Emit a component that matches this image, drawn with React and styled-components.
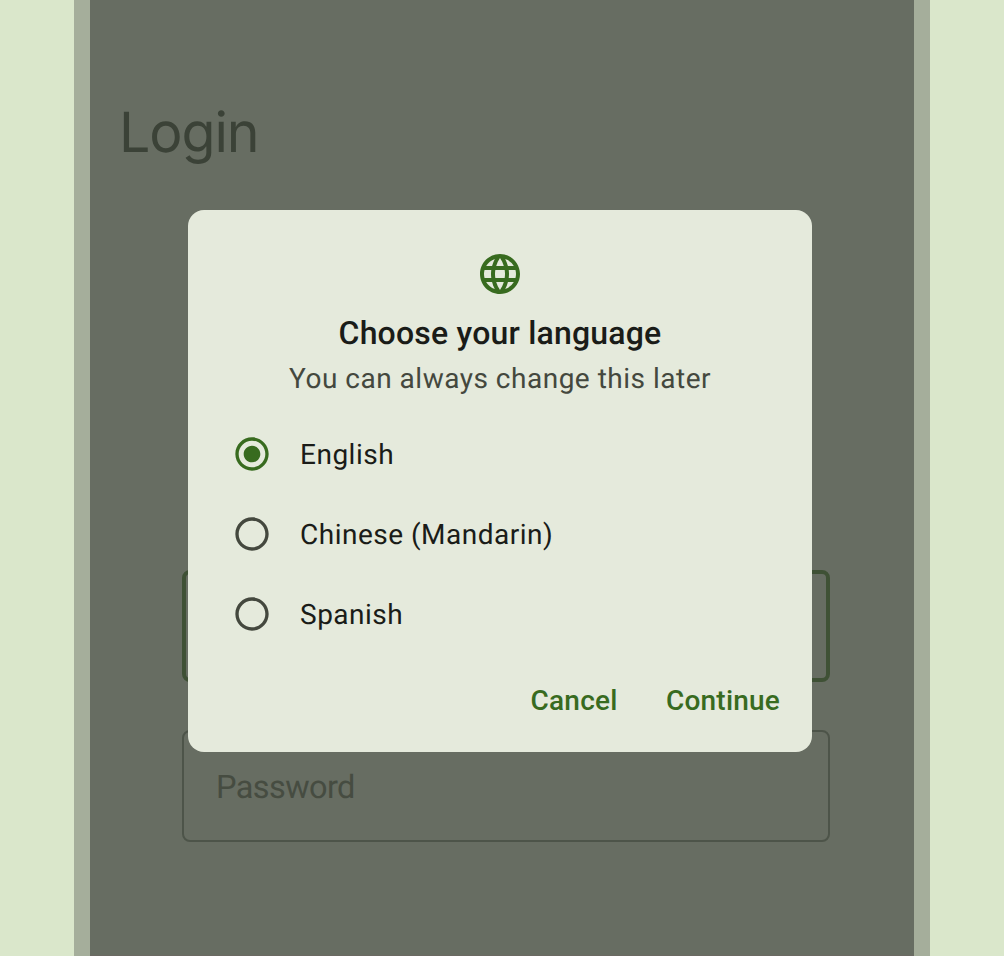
import React from "react";
import styled, { createGlobalStyle } from "styled-components";
import { MdLanguage, MdRadioButtonChecked, MdRadioButtonUnchecked } from "react-icons/md";

const GlobalStyle = createGlobalStyle`
  * { box-sizing: border-box; }
  body { margin: 0; background: #dae7cb; font-family: Roboto, "Liberation Sans", sans-serif; text-rendering: geometricPrecision; }
  h1, h2, p { margin: 0; font-weight: 400; }
`;

const Page = styled.div`
  height: 956px;
  display: flex;
  justify-content: center;
  overflow: hidden;
  background: #dae7cb;
`;

const Device = styled.main`
  position: relative;
  width: 856px;
  height: 956px;
  border: solid #a5ae9b;
  border-width: 0 16px;
  background: #676d62;
  box-shadow: inset 0 -1px #6b6962;
`;

const LoginScreen = styled.section`
  display: flex;
  flex-direction: column;
  padding: 98px 84px 0 92px;
`;

const ScreenTitle = styled.h1`
  height: 70px;
  margin: 0 0 402px -63px;
  font: 430 55.5px/70px Inter, sans-serif;
  letter-spacing: -1.1px;
  color: #3b4237;
`;

const Field = styled.div`
  display: flex;
  align-items: center;
  height: 112px;
  margin-bottom: 48px;
  padding: 2px 32px 0;
  border: ${(p) => (p.$focused ? "4px solid #3f5135" : "2px solid #4d5449")};
  border-radius: 8px;
  font-size: 32.5px;
  line-height: 40px;
  letter-spacing: -0.6px;
  color: #464c41;
`;

const Dialog = styled.section`
  position: absolute;
  top: 210px;
  left: 98px;
  width: 624px;
  height: 542px;
  padding: 40px 32px 0;
  display: flex;
  flex-direction: column;
  border-radius: 16px;
  background: #e5eadc;
`;

const DialogHeader = styled.header`
  display: flex;
  flex-direction: column;
  align-items: center;
  color: #386b1f;
`;

const DialogTitle = styled.h2`
  margin-top: 11px;
  font-size: 32px;
  font-weight: 500;
  line-height: 48px;
  letter-spacing: 0.2px;
  color: #1a1c18;
`;

const Supporting = styled.p`
  padding-top: 2px;
  font-size: 28px;
  line-height: 40px;
  letter-spacing: 0.5px;
  color: #44483e;
`;

const Options = styled.div`
  margin-top: 15px;
`;

const Option = styled.div`
  display: flex;
  align-items: center;
  gap: 28px;
  height: 80px;
  padding-left: 12px;
  font-size: 28px;
  line-height: 40px;
  letter-spacing: 0.5px;
  color: #1a1c18;

  svg { color: ${(p) => (p.$selected ? "#386b1f" : "#44483e")}; }
`;

const OptionLabel = styled.span`
  padding-top: 2px;
`;

const Actions = styled.footer`
  display: flex;
  justify-content: flex-end;
  gap: 48.5px;
  margin-top: 27px;
`;

const TextButton = styled.button`
  padding: 0;
  border: 0;
  background: none;
  font: 500 28px/40px Roboto, sans-serif;
  letter-spacing: 0.2px;
  color: #386b1f;
`;

const languages = ["English", "Chinese (Mandarin)", "Spanish"];

export default function App() {
  return (
    <Page>
      <GlobalStyle />
      <Device>
        <LoginScreen>
          <ScreenTitle>Login</ScreenTitle>
          <Field $focused />
          <Field>Password</Field>
        </LoginScreen>
        <Dialog role="dialog">
          <DialogHeader>
            <MdLanguage size={48} />
            <DialogTitle>Choose your language</DialogTitle>
            <Supporting>You can always change this later</Supporting>
          </DialogHeader>
          <Options role="radiogroup">
            {languages.map((name, i) => (
              <Option key={name} role="radio" aria-checked={i === 0} $selected={i === 0}>
                {i === 0 ? <MdRadioButtonChecked size={40} /> : <MdRadioButtonUnchecked size={40} />}
                <OptionLabel>{name}</OptionLabel>
              </Option>
            ))}
          </Options>
          <Actions>
            <TextButton>Cancel</TextButton>
            <TextButton>Continue</TextButton>
          </Actions>
        </Dialog>
      </Device>
    </Page>
  );
}
